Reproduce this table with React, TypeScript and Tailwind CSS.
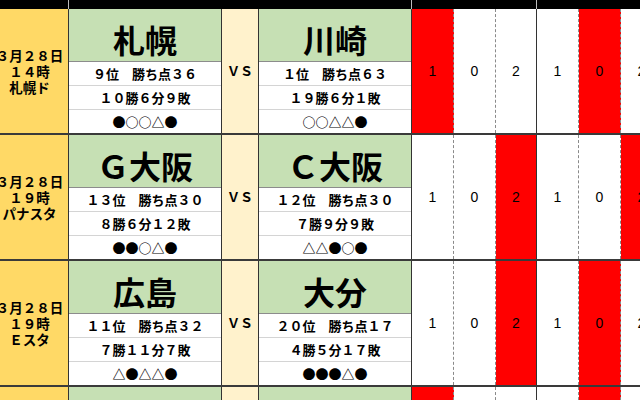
import React from 'react';

// Match schedule sheet (J-League style) with result columns

type Team = {
    name: string;
    rank: string;
    record: string;
    form: string;
};

type Match = {
    date: string[];
    home: Team;
    away: Team;
    reds: boolean[];
};

const values = ['1', '0', '2', '1', '0', '2'];

const matches: Match[] = [
    {
        date: ['３月２８日', '１４時', '札幌ド'],
        home: { name: '札幌', rank: '９位　勝ち点３６', record: '１０勝６分９敗', form: '●○○△●' },
        away: { name: '川崎', rank: '１位　勝ち点６３', record: '１９勝６分１敗', form: '○○△△●' },
        reds: [true, false, false, false, true, false],
    },
    {
        date: ['３月２８日', '１９時', 'パナスタ'],
        home: { name: 'Ｇ大阪', rank: '１３位　勝ち点３０', record: '８勝６分１２敗', form: '●●○△●' },
        away: { name: 'Ｃ大阪', rank: '１２位　勝ち点３０', record: '７勝９分９敗', form: '△△●○●' },
        reds: [false, false, true, false, false, true],
    },
    {
        date: ['３月２８日', '１９時', 'Ｅスタ'],
        home: { name: '広島', rank: '１１位　勝ち点３２', record: '７勝１１分７敗', form: '△●△△●' },
        away: { name: '大分', rank: '２０位　勝ち点１７', record: '４勝５分１７敗', form: '●●●△●' },
        reds: [false, false, true, false, true, false],
    },
    {
        date: ['', '', ''],
        home: { name: '', rank: '', record: '', form: '' },
        away: { name: '', rank: '', record: '', form: '' },
        reds: [true, false, false, false, true, false],
    },
];

// width + right border style of each result column
const numCols = [
    'w-[42px] border-r border-dashed border-r-[#8a8a8a]',
    'w-[42px] border-r border-dashed border-r-[#8a8a8a]',
    'w-[41px] border-r border-r-[#333333]',
    'w-[42px] border-r border-dashed border-r-[#8a8a8a]',
    'w-[42px] border-r border-dashed border-r-[#8a8a8a]',
    'w-[42px] border-r border-dashed border-r-[#8a8a8a]',
];

function TeamBlock({ team }: { team: Team }) {
    return (
        <div className="w-[153px] shrink-0 flex flex-col border-r border-r-[#333333]">
            <div className="h-[53px] bg-[#c6e0b4] border-b border-b-[#8c8c8c] flex items-center justify-center pt-[8px]">
                <span className="text-[32px] leading-none font-bold text-black">{team.name}</span>
            </div>
            <div className="h-[24px] bg-white border-b border-b-[#d4d4d4] flex items-center justify-center text-[13px] font-bold">
                {team.rank}
            </div>
            <div className="h-[24px] bg-white border-b border-b-[#d4d4d4] flex items-center justify-center text-[13px] font-bold">
                {team.record}
            </div>
            <div className="h-[23px] bg-white flex items-center justify-center text-[13px] font-bold">
                {team.form}
            </div>
        </div>
    );
}

function MatchRow({ match }: { match: Match }) {
    return (
        <div className="flex h-[126px] shrink-0 border-b-2 border-b-[#3a3a3a]">
            <div className="w-[78px] shrink-0 bg-[#ffd966] border-r border-r-[#333333] flex flex-col items-center justify-center text-[13.5px] leading-[16px] font-bold">
                {match.date.map((line, i) => (
                    <div key={i}>{line}</div>
                ))}
            </div>
            <TeamBlock team={match.home} />
            <div className="w-[37px] shrink-0 bg-[#fff2cc] border-r border-r-[#333333] flex items-center justify-center text-[13px] font-bold">
                {match.home.name ? 'ＶＳ' : ''}
            </div>
            <TeamBlock team={match.away} />
            {numCols.map((cls, i) => (
                <div
                    key={i}
                    className={`${cls} shrink-0 flex items-center justify-center text-[14px] text-black ${match.reds[i] ? 'bg-[#ff0000]' : 'bg-white'}`}
                    style={{ fontFamily: '"Liberation Sans", Arial, sans-serif' }}
                >
                    {values[i]}
                </div>
            ))}
        </div>
    );
}

export default function App() {
    return (
        <div
            className="w-[640px] h-[400px] overflow-hidden bg-white text-black"
            style={{ fontFamily: '"Noto Sans CJK JP", "Noto Sans", sans-serif' }}
        >
            <div className="ml-[-9px] w-[672px] flex flex-col">
                {/* black header strip */}
                <div className="flex h-[9px] bg-black">
                    <div className="w-[78px] shrink-0 border-r border-r-[#bdbdbd]" />
                    <div className="w-[153px] shrink-0" />
                    <div className="w-[37px] shrink-0" />
                    <div className="w-[153px] shrink-0 border-r border-r-[#bdbdbd]" />
                    <div className="w-[42px] shrink-0" />
                    <div className="w-[42px] shrink-0" />
                    <div className="w-[41px] shrink-0 border-r border-r-[#bdbdbd]" />
                    <div className="w-[126px] shrink-0" />
                </div>
                {matches.map((m, i) => (
                    <MatchRow key={i} match={m} />
                ))}
            </div>
        </div>
    );
}
